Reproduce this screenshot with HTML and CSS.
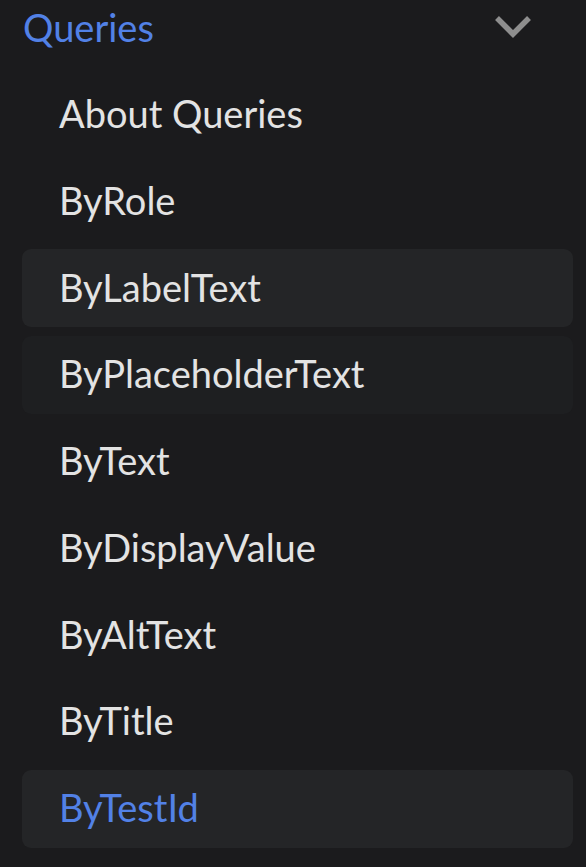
FILE: index.html
```html
<!DOCTYPE html>
<html>
<head>
<meta charset="utf-8">
<link rel="stylesheet" href="styles.css">
</head>
<body>
<nav class="sidebar">
  <div class="category">
    <span class="category-label">Queries</span>
    <svg class="caret" width="40" height="28" viewBox="0 0 40 28"><path d="M3 5 L19 21 L35 5" fill="none" stroke="#8e8e8e" stroke-width="5.5"/></svg>
  </div>
  <ul class="menu">
    <li class="item">About Queries</li>
    <li class="item">ByRole</li>
    <li class="item hovered">ByLabelText</li>
    <li class="item faint">ByPlaceholderText</li>
    <li class="item">ByText</li>
    <li class="item">ByDisplayValue</li>
    <li class="item">ByAltText</li>
    <li class="item">ByTitle</li>
    <li class="item active">ByTestId</li>
  </ul>
</nav>
</body>
</html>
```
FILE: styles.css
```css
html, body {
  margin: 0;
  padding: 0;
  background: #1b1b1d;
  height: 100%;
  overflow: hidden;
}
.sidebar {
  padding: 0 13px 0 22px;
  font-family: "Lato", "Noto Sans", sans-serif;
  font-size: 38px;
}
.category {
  display: flex;
  align-items: center;
  justify-content: space-between;
  height: 58px;
  padding-left: 1px;
  padding-right: 39px;
}
.category-label {
  color: #5281e6;
  margin-top: -4px;
}
.caret {
  display: block;
  margin-top: -4px;
}
.menu {
  list-style: none;
  margin: 0;
  padding: 0;
  display: flex;
  flex-direction: column;
  gap: 8.75px;
  margin-top: 17.5px;
}
.item {
  height: 78px;
  box-sizing: border-box;
  display: flex;
  align-items: center;
  padding-left: 37px;
  padding-bottom: 3px;
  border-radius: 9px;
  color: #e3e3e3;
}
.hovered, .active {
  background: #242527;
}
.faint {
  background: #1e1f21;
}
.active {
  color: #5281e6;
}
```
